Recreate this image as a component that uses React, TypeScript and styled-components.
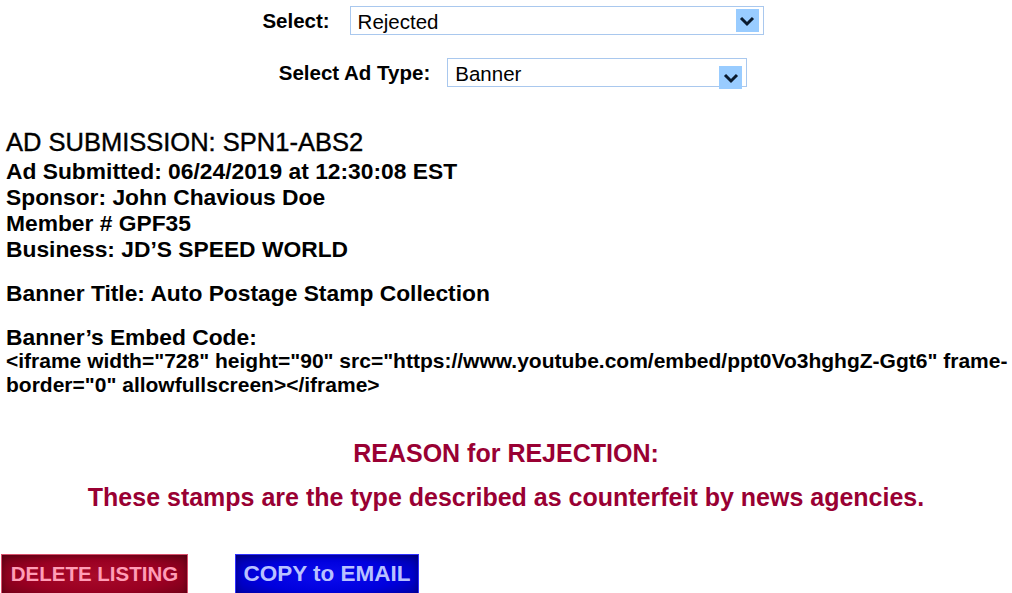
import React from "react";
import styled, { createGlobalStyle } from "styled-components";

const GlobalStyle = createGlobalStyle`
  html, body {
    margin: 0;
    padding: 0;
    background: #ffffff;
  }
  body {
    font-family: "Liberation Sans", Arial, sans-serif;
    color: #000000;
  }
`;

const Page = styled.div`
  width: 1012px;
  height: 593px;
  overflow: hidden;
  display: flex;
  flex-direction: column;
`;

const SelectRow = styled.div<{ $top: number; $gap: number }>`
  display: flex;
  align-items: center;
  justify-content: center;
  gap: ${(p) => p.$gap}px;
  margin-top: ${(p) => p.$top}px;
  padding-left: 14px;
`;

const Label = styled.span`
  font-size: 20.5px;
  font-weight: bold;
`;

const SelectBox = styled.div<{ $width: number }>`
  position: relative;
  width: ${(p) => p.$width}px;
  height: 29px;
  box-sizing: border-box;
  border: 1px solid #a9c8ee;
  display: flex;
  align-items: center;
  padding-left: 7px;
  padding-top: 2px;
  font-size: 20.5px;
`;

const Arrow = styled.span<{ $drop: number }>`
  position: absolute;
  right: 4px;
  top: ${(p) => 2 + p.$drop}px;
  width: 23px;
  height: 23px;
  background: #99ccff;
  display: flex;
  align-items: center;
  justify-content: center;
`;

const Details = styled.div`
  margin-top: 42px;
  padding-left: 6px;
  font-weight: bold;
  font-size: 22.8px;
  line-height: 26px;
`;

const Heading = styled.div`
  font-size: 25.5px;
  font-weight: normal;
  -webkit-text-stroke: 0.4px #000;
  margin-bottom: 3px;
`;

const Block = styled.div<{ $top: number }>`
  margin-top: ${(p) => p.$top}px;
`;

const Code = styled.div`
  font-size: 21px;
  line-height: 24px;
  padding-right: 4px;
  margin-top: -1px;
`;

const Reason = styled.div`
  margin-top: 41px;
  text-align: center;
  color: #990033;
  font-weight: bold;
`;

const ReasonTitle = styled.div`
  font-size: 25px;
  line-height: 30px;
`;

const ReasonText = styled.div`
  margin-top: 14px;
  font-size: 25px;
  line-height: 30px;
`;

const Buttons = styled.div`
  flex-shrink: 0;
  margin-top: 42px;
  display: flex;
  gap: 47px;
  padding-left: 1px;
`;

const ActionButton = styled.button<{ $tone: "red" | "blue"; $width: number }>`
  flex: none;
  width: ${(p) => p.$width}px;
  height: 44px;
  font-family: "Liberation Sans", Arial, sans-serif;
  font-weight: bold;
  font-size: ${(p) => (p.$tone === "red" ? 20.5 : 22.5)}px;
  padding: 0 0 4px;
  cursor: pointer;
  border: 1px solid ${(p) => (p.$tone === "red" ? "#d8506c" : "#3030ff")};
  color: ${(p) => (p.$tone === "red" ? "#ff9db6" : "#b8c0ff")};
  background: ${(p) =>
    p.$tone === "red"
      ? "radial-gradient(ellipse at center, #a80a2a 0%, #9a0022 55%, #6e0016 100%)"
      : "radial-gradient(ellipse at center, #0a0aee 0%, #0000dd 55%, #00009a 100%)"};
  box-shadow: inset 0 0 6px rgba(0, 0, 0, 0.35);
`;

const Chevron = () => (
  <svg width="16" height="12" viewBox="0 0 16 12">
    <path d="M2 3 L8 9 L14 3" fill="none" stroke="#0a1a2e" strokeWidth="3" />
  </svg>
);

const App = () => {
  return (
    <Page>
      <GlobalStyle />
      <SelectRow $top={6} $gap={20}>
        <Label>Select:</Label>
        <SelectBox $width={414}>
          Rejected
          <Arrow $drop={0}>
            <Chevron />
          </Arrow>
        </SelectBox>
      </SelectRow>
      <SelectRow $top={23} $gap={17}>
        <Label>Select Ad Type:</Label>
        <SelectBox $width={300}>
          Banner
          <Arrow $drop={5}>
            <Chevron />
          </Arrow>
        </SelectBox>
      </SelectRow>

      <Details>
        <Heading>AD SUBMISSION: SPN1-ABS2</Heading>
        <div>Ad Submitted: 06/24/2019 at 12:30:08 EST</div>
        <div>Sponsor: John Chavious Doe</div>
        <div>Member # GPF35</div>
        <div>Business: JD’S SPEED WORLD</div>
        <Block $top={18}>Banner Title: Auto Postage Stamp Collection</Block>
        <Block $top={18}>Banner’s Embed Code:</Block>
        <Code>
          &lt;iframe width="728" height="90"
          src="https://www.youtube.com/embed/ppt0Vo3hghgZ-Ggt6" frame{"\u00AD"}border="0"
          allowfullscreen&gt;&lt;/iframe&gt;
        </Code>
      </Details>

      <Reason>
        <ReasonTitle>REASON for REJECTION:</ReasonTitle>
        <ReasonText>These stamps are the type described as counterfeit by news agencies.</ReasonText>
      </Reason>

      <Buttons>
        <ActionButton $tone="red" $width={187}>DELETE LISTING</ActionButton>
        <ActionButton $tone="blue" $width={184}>COPY to EMAIL</ActionButton>
      </Buttons>
    </Page>
  );
};

export default App;
